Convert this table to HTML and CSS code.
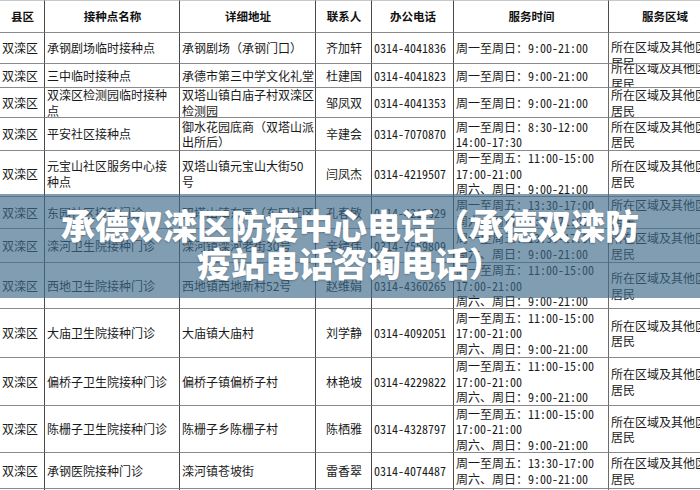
FILE: index.html
```html
<!DOCTYPE html>
<html lang="zh-CN">
<head>
<meta charset="utf-8">
<title>承德双滦区防疫中心电话</title>
<link rel="stylesheet" href="styles.css">
</head>
<body>
<div class="page">
  <div class="sheet">
    <div class="c hd">县区</div><div class="c hd">接种点名称</div><div class="c hd">详细地址</div><div class="c hd">联系人</div><div class="c hd">办公电话</div><div class="c hd">服务时间</div><div class="c hd">服务区域</div>

    <div class="c">双滦区</div><div class="c">承钢剧场临时接种点</div><div class="c">承钢剧场（承钢门口）</div><div class="c ctr">齐加轩</div><div class="c num">0314-4041836</div><div class="c num">周一至周日：9:00-21:00</div><div class="c area top">所在区域及其他区域<br>居民</div>

    <div class="c">双滦区</div><div class="c">三中临时接种点</div><div class="c">承德市第三中学文化礼堂</div><div class="c ctr">杜建国</div><div class="c num">0314-4041823</div><div class="c num">周一至周日：9:00-21:00</div><div class="c area">所在区域及其他区域<br>居民</div>

    <div class="c">双滦区</div><div class="c">双滦区检测园临时接种<br>点</div><div class="c">双塔山镇白庙子村双滦区<br>检测园</div><div class="c ctr">邹凤双</div><div class="c num">0314-4041353</div><div class="c num">周一至周日：9:00-21:00</div><div class="c area">所在区域及其他区域<br>居民</div>

    <div class="c">双滦区</div><div class="c">平安社区接种点</div><div class="c">御水花园底商（双塔山派<br>出所后）</div><div class="c ctr">辛建会</div><div class="c num">0314-7070870</div><div class="c num">周一至周日：8:30-12:00<br>14:00-17:30</div><div class="c area">所在区域及其他区域<br>居民</div>

    <div class="c">双滦区</div><div class="c">元宝山社区服务中心接<br>种点</div><div class="c">双塔山镇元宝山大街50<br>号</div><div class="c ctr">闫凤杰</div><div class="c num">0314-4219507</div><div class="c num">周一至周五：11:00-15:00<br>17:00-21:00<br>周六、周日：9:00-21:00</div><div class="c area">所在区域及其他区域<br>居民</div>

    <div class="c">双滦区</div><div class="c">东园社区接种门诊</div><div class="c">双塔山镇东园（东园社区）</div><div class="c ctr">孔春敏</div><div class="c num">0314-4212329</div><div class="c num">周一至周五：13:30-17:00<br>周六、周日：9:00-21:00</div><div class="c area">所在区域及其他区域<br>居民</div>

    <div class="c">双滦区</div><div class="c">滦河卫生院接种门诊</div><div class="c">滦河镇滦河老街30号</div><div class="c ctr">辛绩伟</div><div class="c num">0314-7559809</div><div class="c num">周一至周五：13:30-17:00<br>周六、周日：9:00-21:00</div><div class="c area">所在区域及其他区域<br>居民</div>

    <div class="c">双滦区</div><div class="c">西地卫生院接种门诊</div><div class="c">西地镇西地新村52号</div><div class="c ctr">赵维娟</div><div class="c num">0314-4360265</div><div class="c num">周一至周五：11:00-15:00<br>17:00-21:00<br>周六、周日：9:00-21:00</div><div class="c area">所在区域及其他区域<br>居民</div>

    <div class="c">双滦区</div><div class="c">大庙卫生院接种门诊</div><div class="c">大庙镇大庙村</div><div class="c ctr">刘学静</div><div class="c num">0314-4092051</div><div class="c num">周一至周五：11:00-15:00<br>17:00-21:00<br>周六、周日：9:00-21:00</div><div class="c area">所在区域及其他区域<br>居民</div>

    <div class="c">双滦区</div><div class="c">偏桥子卫生院接种门诊</div><div class="c">偏桥子镇偏桥子村</div><div class="c ctr">林艳坡</div><div class="c num">0314-4229822</div><div class="c num">周一至周五：11:00-15:00<br>17:00-21:00<br>周六、周日：9:00-21:00</div><div class="c area">所在区域及其他区域<br>居民</div>

    <div class="c">双滦区</div><div class="c">陈栅子卫生院接种门诊</div><div class="c">陈栅子乡陈栅子村</div><div class="c ctr">陈栖雅</div><div class="c num">0314-4328797</div><div class="c num">周一至周五：11:00-15:00<br>17:00-21:00<br>周六、周日：9:00-21:00</div><div class="c area">所在区域及其他区域<br>居民</div>

    <div class="c">双滦区</div><div class="c">承钢医院接种门诊</div><div class="c">滦河镇苍坡街</div><div class="c ctr">雷香翠</div><div class="c num">0314-4074487</div><div class="c num">周一至周五：13:30-17:00<br>周六、周日：9:00-21:00</div><div class="c area">所在区域及其他区域<br>居民</div>

    <div class="c"></div><div class="c"></div><div class="c"></div><div class="c"></div><div class="c"></div><div class="c"></div><div class="c area"></div>
  </div>

  <div class="banner">
    <h1 class="title">承德双滦区防疫中心电话（承德双滦防疫站电话咨询电话）</h1>
  </div>
</div>
</body>
</html>
```

FILE: styles.css
```css
html, body {
  margin: 0;
  padding: 0;
  width: 700px;
  height: 490px;
  overflow: hidden;
  background: #ffffff;
}

.page {
  position: relative;
  width: 700px;
  height: 490px;
  overflow: hidden;
}

.sheet {
  display: grid;
  width: 721px;
  grid-template-columns: 45px 135px 136px 56px 82px 155px 112px;
  grid-template-rows: 33px 31px 24px 30px 33px 46px 32px 34px 46px 49px 48px 47px 36px 30px;
  font-family: "Noto Sans CJK SC", "Noto Sans", sans-serif;
  font-size: 12px;
  line-height: 15.5px;
  color: #1a1a1a;
}

.c {
  box-sizing: border-box;
  display: flex;
  align-items: center;
  padding: 0 1px 0 2px;
  border-right: 1px solid #4a4a4a;
  border-bottom: 1px solid #8a8a8a;
  white-space: nowrap;
  overflow: hidden;
}

.num {
  font-feature-settings: "hwid";
}

.hd {
  justify-content: center;
  border-top: 1px solid #c8c8c8;
  font-size: 11.5px;
  font-weight: 700;
  color: #111;
}

.ctr {
  justify-content: center;
}

.area {
  border-right: none;
  border-left: 1px solid #6a6a6a;
  margin-left: -1px;
}

.top {
  align-items: flex-start;
  padding-top: 6px;
}

.banner {
  position: absolute;
  left: 0;
  top: 194px;
  width: 700px;
  height: 104px;
  box-sizing: border-box;
  padding: 0 45px 4px;
  display: flex;
  align-items: center;
  justify-content: center;
  background: rgba(62, 106, 138, 0.66);
}

.title {
  margin: 0;
  font-family: "Noto Sans CJK SC", "Noto Sans", sans-serif;
  font-size: 34px;
  line-height: 38px;
  font-weight: 900;
  color: #ffffff;
  text-align: center;
  text-shadow: 0 1px 2px rgba(0, 0, 0, 0.25);
}
```
